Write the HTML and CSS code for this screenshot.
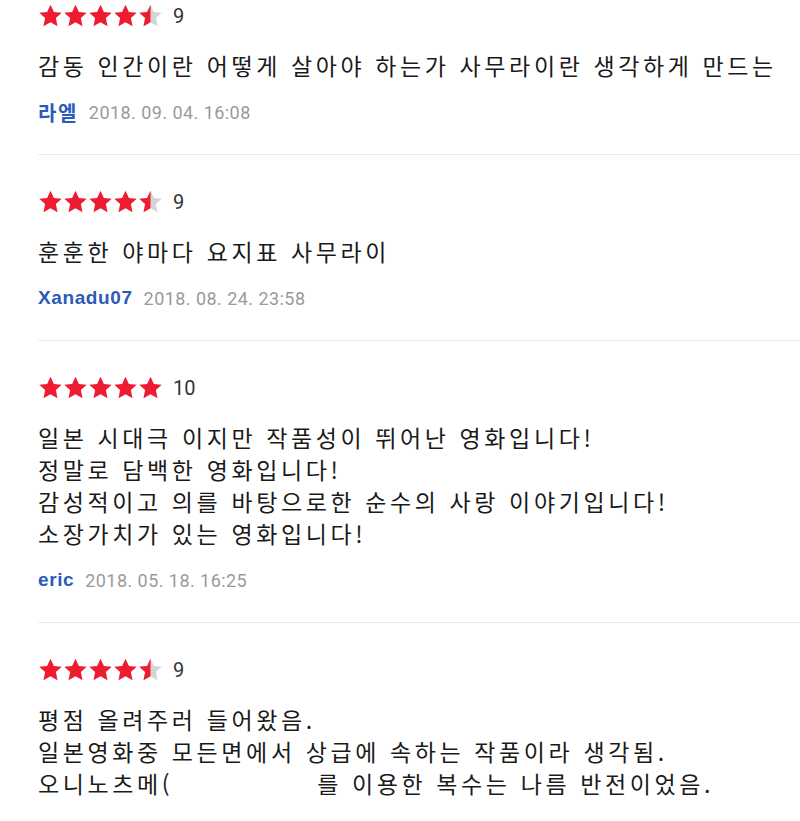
FILE: index.html
```html
<!DOCTYPE html>
<html lang="ko">
<head>
<meta charset="utf-8">
<title>리뷰</title>
<link rel="stylesheet" href="styles.css">
</head>
<body>
<ul class="reviews">
  <li class="review">
    <div class="rating">
      <span class="stars">
        <svg class="star" viewBox="0 0 24 24"><polygon class="on" points="12,0.8 15.4,7.9 23.2,8.8 17.4,14.1 19,22.2 12,18.3 5,22.2 6.6,14.1 0.8,8.8 8.6,7.9"/></svg>
        <svg class="star" viewBox="0 0 24 24"><polygon class="on" points="12,0.8 15.4,7.9 23.2,8.8 17.4,14.1 19,22.2 12,18.3 5,22.2 6.6,14.1 0.8,8.8 8.6,7.9"/></svg>
        <svg class="star" viewBox="0 0 24 24"><polygon class="on" points="12,0.8 15.4,7.9 23.2,8.8 17.4,14.1 19,22.2 12,18.3 5,22.2 6.6,14.1 0.8,8.8 8.6,7.9"/></svg>
        <svg class="star" viewBox="0 0 24 24"><polygon class="on" points="12,0.8 15.4,7.9 23.2,8.8 17.4,14.1 19,22.2 12,18.3 5,22.2 6.6,14.1 0.8,8.8 8.6,7.9"/></svg>
        <svg class="star" viewBox="0 0 24 24"><polygon class="off" points="12,0.8 15.4,7.9 23.2,8.8 17.4,14.1 19,22.2 12,18.3 5,22.2 6.6,14.1 0.8,8.8 8.6,7.9"/><polygon class="on" points="12,0.8 12,18.3 5,22.2 6.6,14.1 0.8,8.8 8.6,7.9"/></svg>
      </span>
      <span class="score">9</span>
    </div>
    <p class="text">감동 인간이란 어떻게 살아야 하는가 사무라이란 생각하게 만드는</p>
    <div class="meta"><span class="author ko">라엘</span><span class="date">2018. 09. 04. 16:08</span></div>
  </li>
  <li class="review">
    <div class="rating">
      <span class="stars">
        <svg class="star" viewBox="0 0 24 24"><polygon class="on" points="12,0.8 15.4,7.9 23.2,8.8 17.4,14.1 19,22.2 12,18.3 5,22.2 6.6,14.1 0.8,8.8 8.6,7.9"/></svg>
        <svg class="star" viewBox="0 0 24 24"><polygon class="on" points="12,0.8 15.4,7.9 23.2,8.8 17.4,14.1 19,22.2 12,18.3 5,22.2 6.6,14.1 0.8,8.8 8.6,7.9"/></svg>
        <svg class="star" viewBox="0 0 24 24"><polygon class="on" points="12,0.8 15.4,7.9 23.2,8.8 17.4,14.1 19,22.2 12,18.3 5,22.2 6.6,14.1 0.8,8.8 8.6,7.9"/></svg>
        <svg class="star" viewBox="0 0 24 24"><polygon class="on" points="12,0.8 15.4,7.9 23.2,8.8 17.4,14.1 19,22.2 12,18.3 5,22.2 6.6,14.1 0.8,8.8 8.6,7.9"/></svg>
        <svg class="star" viewBox="0 0 24 24"><polygon class="off" points="12,0.8 15.4,7.9 23.2,8.8 17.4,14.1 19,22.2 12,18.3 5,22.2 6.6,14.1 0.8,8.8 8.6,7.9"/><polygon class="on" points="12,0.8 12,18.3 5,22.2 6.6,14.1 0.8,8.8 8.6,7.9"/></svg>
      </span>
      <span class="score">9</span>
    </div>
    <p class="text">훈훈한 야마다 요지표 사무라이</p>
    <div class="meta"><span class="author">Xanadu07</span><span class="date">2018. 08. 24. 23:58</span></div>
  </li>
  <li class="review">
    <div class="rating">
      <span class="stars">
        <svg class="star" viewBox="0 0 24 24"><polygon class="on" points="12,0.8 15.4,7.9 23.2,8.8 17.4,14.1 19,22.2 12,18.3 5,22.2 6.6,14.1 0.8,8.8 8.6,7.9"/></svg>
        <svg class="star" viewBox="0 0 24 24"><polygon class="on" points="12,0.8 15.4,7.9 23.2,8.8 17.4,14.1 19,22.2 12,18.3 5,22.2 6.6,14.1 0.8,8.8 8.6,7.9"/></svg>
        <svg class="star" viewBox="0 0 24 24"><polygon class="on" points="12,0.8 15.4,7.9 23.2,8.8 17.4,14.1 19,22.2 12,18.3 5,22.2 6.6,14.1 0.8,8.8 8.6,7.9"/></svg>
        <svg class="star" viewBox="0 0 24 24"><polygon class="on" points="12,0.8 15.4,7.9 23.2,8.8 17.4,14.1 19,22.2 12,18.3 5,22.2 6.6,14.1 0.8,8.8 8.6,7.9"/></svg>
        <svg class="star" viewBox="0 0 24 24"><polygon class="on" points="12,0.8 15.4,7.9 23.2,8.8 17.4,14.1 19,22.2 12,18.3 5,22.2 6.6,14.1 0.8,8.8 8.6,7.9"/></svg>
      </span>
      <span class="score">10</span>
    </div>
    <p class="text">일본 시대극 이지만 작품성이 뛰어난 영화입니다!<br>정말로 담백한 영화입니다!<br>감성적이고 의를 바탕으로한 순수의 사랑 이야기입니다!<br>소장가치가 있는 영화입니다!</p>
    <div class="meta"><span class="author">eric</span><span class="date">2018. 05. 18. 16:25</span></div>
  </li>
  <li class="review">
    <div class="rating">
      <span class="stars">
        <svg class="star" viewBox="0 0 24 24"><polygon class="on" points="12,0.8 15.4,7.9 23.2,8.8 17.4,14.1 19,22.2 12,18.3 5,22.2 6.6,14.1 0.8,8.8 8.6,7.9"/></svg>
        <svg class="star" viewBox="0 0 24 24"><polygon class="on" points="12,0.8 15.4,7.9 23.2,8.8 17.4,14.1 19,22.2 12,18.3 5,22.2 6.6,14.1 0.8,8.8 8.6,7.9"/></svg>
        <svg class="star" viewBox="0 0 24 24"><polygon class="on" points="12,0.8 15.4,7.9 23.2,8.8 17.4,14.1 19,22.2 12,18.3 5,22.2 6.6,14.1 0.8,8.8 8.6,7.9"/></svg>
        <svg class="star" viewBox="0 0 24 24"><polygon class="on" points="12,0.8 15.4,7.9 23.2,8.8 17.4,14.1 19,22.2 12,18.3 5,22.2 6.6,14.1 0.8,8.8 8.6,7.9"/></svg>
        <svg class="star" viewBox="0 0 24 24"><polygon class="off" points="12,0.8 15.4,7.9 23.2,8.8 17.4,14.1 19,22.2 12,18.3 5,22.2 6.6,14.1 0.8,8.8 8.6,7.9"/><polygon class="on" points="12,0.8 12,18.3 5,22.2 6.6,14.1 0.8,8.8 8.6,7.9"/></svg>
      </span>
      <span class="score">9</span>
    </div>
    <p class="text">평점 올려주러 들어왔음.<br>일본영화중 모든면에서 상급에 속하는 작품이라 생각됨.<br>오니노츠메(<span class="gap"></span>를 이용한 복수는 나름 반전이었음.</p>
    <div class="meta"><span class="author ko">잠시나</span><span class="date">2018. 05. 02. 11:20</span></div>
  </li>
</ul>
</body>
</html>
```
FILE: styles.css
```css
html, body {
  margin: 0;
  padding: 0;
  background: #ffffff;
}
body {
  overflow: hidden;
  font-family: "Noto Sans CJK KR", "Noto Sans", sans-serif;
  color: #1a1a1a;
}
.reviews {
  list-style: none;
  margin: -31px 0 0 0;
  padding: 0 0 0 38px;
}
.review {
  padding: 35px 0 32px 0;
  border-bottom: 1px solid #ebebeb;
}
.rating {
  display: flex;
  align-items: center;
  height: 24px;
}
.stars {
  display: flex;
}
.star {
  width: 25px;
  height: 24px;
  display: block;
}
.star .on { fill: #ee1c31; }
.star .off { fill: #d4d4d4; }
.score {
  margin-left: 10px;
  font-family: "Roboto", "Liberation Sans", sans-serif;
  font-size: 20px;
  color: #333333;
  line-height: 24px;
}
.text {
  margin: 21px 0 0 0;
  font-size: 23px;
  line-height: 32px;
  letter-spacing: 3.6px;
  color: #1a1a1a;
  white-space: nowrap;
}
.gap {
  display: inline-block;
  width: 144px;
}
.meta {
  margin-top: 21px;
  display: flex;
  align-items: center;
  height: 20px;
  gap: 11px;
}
.author {
  font-family: "Liberation Sans", "Noto Sans CJK KR", sans-serif;
  font-weight: bold;
  font-size: 19px;
  color: #2c5ab8;
  letter-spacing: 0.6px;
}
.author.ko {
  font-family: "Noto Sans CJK KR", sans-serif;
  font-size: 20px;
  letter-spacing: 1.5px;
}
.date {
  font-family: "Roboto", "Liberation Sans", sans-serif;
  font-size: 18px;
  color: #9a9a9a;
  letter-spacing: 0.45px;
}
```
